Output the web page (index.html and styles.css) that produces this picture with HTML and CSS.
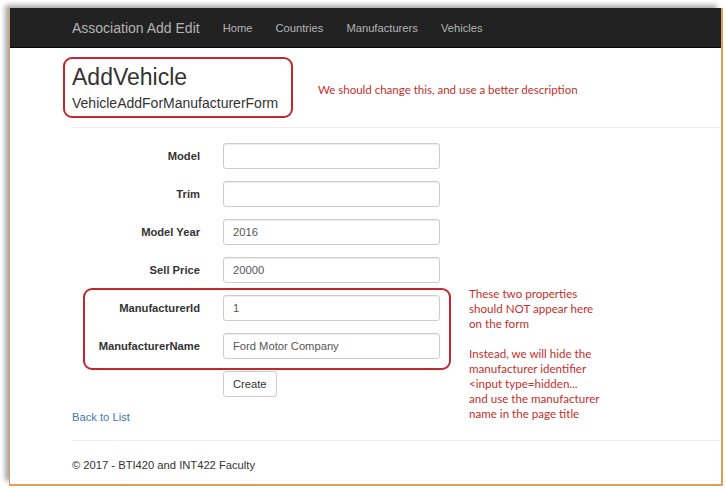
FILE: index.html
```html
<!DOCTYPE html>
<html lang="en">
<head>
<meta charset="utf-8">
<title>AddVehicle</title>
<link rel="stylesheet" href="styles.css">
</head>
<body>
<div class="frame">
  <nav class="navbar">
    <a class="brand" href="#">Association Add Edit</a>
    <ul class="nav">
      <li><a href="#">Home</a></li>
      <li><a href="#">Countries</a></li>
      <li><a href="#">Manufacturers</a></li>
      <li><a href="#">Vehicles</a></li>
    </ul>
  </nav>
  <main class="container">
    <div class="page-head">
      <div class="title-box">
        <h2 class="title">AddVehicle</h2>
        <h4 class="subtitle">VehicleAddForManufacturerForm</h4>
      </div>
      <p class="note note-title">We should change this, and use a better description</p>
    </div>
    <hr class="rule rule-head">
    <form class="form">
      <div class="row"><label class="label">Model</label><input class="input" type="text"></div>
      <div class="row"><label class="label">Trim</label><input class="input" type="text"></div>
      <div class="row"><label class="label">Model Year</label><input class="input" type="text" value="2016"></div>
      <div class="row"><label class="label">Sell Price</label><input class="input" type="text" value="20000"></div>
      <div class="group">
        <div class="row"><label class="label">ManufacturerId</label><input class="input" type="text" value="1"></div>
        <div class="row"><label class="label">ManufacturerName</label><input class="input" type="text" value="Ford Motor Company"></div>
        <div class="note note-side">
          <p>These two properties<br>should NOT appear here<br>on the form</p>
          <p>Instead, we will hide the<br>manufacturer identifier<br>&lt;input type=hidden...<br>and use the manufacturer<br>name in the page title</p>
        </div>
      </div>
      <div class="row"><span></span><div><button class="btn" type="button">Create</button></div></div>
    </form>
    <a class="back" href="#">Back to List</a>
    <hr class="rule rule-foot">
    <footer class="footer">© 2017 - BTI420 and INT422 Faculty</footer>
  </main>
</div>
</body>
</html>
```

FILE: styles.css
```css
* { box-sizing: border-box; }
html, body { margin: 0; padding: 0; background: #fff; }
body {
  font-family: "Liberation Sans", Arial, sans-serif;
  font-size: 11.2px;
  color: #333;
}
.frame {
  margin: 8px 0 0 9px;
  width: 714px;
  height: 478px;
  border-left: 1px solid #d89a5e;
  border-right: 2px solid #e39d5a;
  border-bottom: 2px solid #e39d5a;
  box-shadow: -5px -4px 5px -1px rgba(0,0,0,.35);
  overflow: hidden;
  background: #fff;
}
.navbar {
  height: 40px;
  background: #222;
  border-bottom: 1px solid #080808;
  display: flex;
  align-items: center;
  padding-left: 62px;
  padding-top: 1px;
}
.brand {
  font-size: 14px;
  color: #b4b4b4;
  text-decoration: none;
  line-height: 38px;
}
.nav {
  list-style: none;
  margin: 0 0 0 23px;
  padding: 0;
  display: flex;
  gap: 23px;
}
.nav a {
  color: #b4b4b4;
  text-decoration: none;
  font-size: 11.2px;
  line-height: 38px;
}
.container {
  padding-left: 62px;
}
.page-head {
  display: flex;
  align-items: center;
  margin-top: 9px;
  margin-left: -9px;
}
.title-box {
  width: 230px;
  height: 61px;
  border: 2px solid #c0282d;
  border-radius: 9px;
  padding: 4px 0 0 7px;
}
.title {
  margin: 0;
  font-weight: normal;
  font-size: 23px;
  line-height: 28px;
  color: #333;
}
.subtitle {
  margin: 1.5px 0 0;
  font-weight: normal;
  font-size: 14px;
  line-height: 20px;
  color: #333;
}
.note {
  font-family: Lato, "Open Sans", sans-serif;
  color: #c4302b;
  margin: 0;
}
.note-title {
  margin-left: 25px;
  font-size: 11.5px;
  padding-top: 3px;
}
.rule {
  border: 0;
  border-top: 1px solid #eee;
  margin: 0;
  height: 0;
}
.rule-head { margin-top: 9px; }
.form { margin-top: 15px; }
.row {
  display: grid;
  grid-template-columns: 128px 217px;
  column-gap: 23px;
  align-items: center;
  height: 26px;
  margin-bottom: 12px;
}
.label {
  text-align: right;
  font-weight: bold;
  color: #333;
}
.input {
  height: 26px;
  width: 217px;
  border: 1px solid #ccc;
  border-radius: 3px;
  padding: 0 9px;
  font-family: "Liberation Sans", Arial, sans-serif;
  font-size: 11.2px;
  color: #555;
  box-shadow: inset 0 1px 1px rgba(0,0,0,.075);
  background: #fff;
}
.group { position: relative; }
.group::before {
  content: "";
  position: absolute;
  left: 11px;
  top: -7px;
  width: 364px;
  height: 78px;
  border: 2px solid #c0282d;
  border-radius: 9px;
  pointer-events: none;
}
.note-side {
  position: absolute;
  left: 397px;
  top: -9px;
  font-size: 11.6px;
  line-height: 15px;
}
.note-side p { margin: 0 0 15px; }
.btn {
  height: 26px;
  padding: 0 9px;
  border: 1px solid #ccc;
  border-radius: 3px;
  background: #fff;
  font-family: "Liberation Sans", Arial, sans-serif;
  font-size: 11.2px;
  color: #333;
}
.back {
  display: block;
  color: #4179a8;
  text-decoration: none;
  line-height: 16px;
  margin-top: 0;
}
.rule-foot { margin-top: 15px; }
.footer {
  margin-top: 16px;
  line-height: 16px;
  color: #333;
}
```
